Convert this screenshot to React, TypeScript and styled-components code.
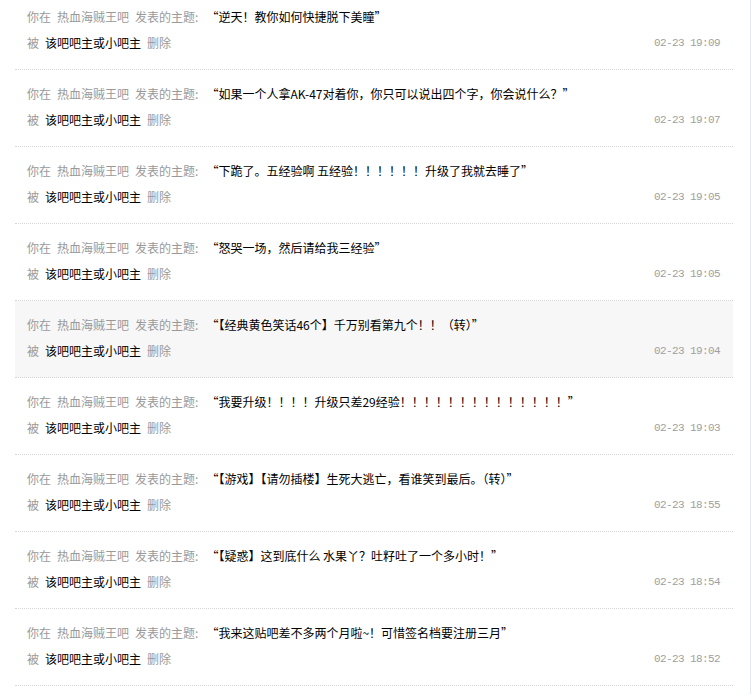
import React from "react";
import styled, { createGlobalStyle } from "styled-components";

interface Post {
  title: string;
  time: string;
}

const posts: Post[] = [
  { title: "“逆天！教你如何快捷脱下美瞳”", time: "02-23 19:09" },
  { title: "“如果一个人拿AK-47对着你，你只可以说出四个字，你会说什么？”", time: "02-23 19:07" },
  { title: "“下跪了。五经验啊 五经验！！！！！！升级了我就去睡了”", time: "02-23 19:05" },
  { title: "“怒哭一场，然后请给我三经验”", time: "02-23 19:05" },
  { title: "“【经典黄色笑话46个】千万别看第九个！！（转）”", time: "02-23 19:04" },
  { title: "“我要升级！！！！升级只差29经验！！！！！！！！！！！！！！”", time: "02-23 19:03" },
  { title: "“【游戏】【请勿插楼】生死大逃亡，看谁笑到最后。（转）”", time: "02-23 18:55" },
  { title: "“【疑惑】这到底什么 水果丫？吐籽吐了一个多小时！”", time: "02-23 18:54" },
  { title: "“我来这贴吧差不多两个月啦~！可惜签名档要注册三月”", time: "02-23 18:52" },
];

const GlobalStyle = createGlobalStyle`
  body {
    margin: 0;
    background: #fff;
    font-family: "Noto Sans CJK SC", "DejaVu Sans", sans-serif;
    font-size: 12px;
  }
`;

const Page = styled.div`
  width: 750px;
  height: 694px;
  overflow: hidden;
  border-right: 1px solid #e2e9f6;
`;

const List = styled.ul`
  list-style: none;
  margin: 0;
  padding: 0 0 0 15px;
  width: 718px;
`;

const Item = styled.li<{ $active?: boolean }>`
  display: flex;
  flex-direction: column;
  gap: 12px;
  padding: 17px 13px 19px 12px;
  border-bottom: 1px dotted #d6d6d6;
  background: ${(p) => (p.$active ? "#f7f7f7" : "transparent")};

  &:first-child {
    padding-top: 10px;
  }
`;

const Line = styled.div`
  display: flex;
  align-items: center;
  height: 14px;
  line-height: 14px;
  white-space: nowrap;
`;

const Muted = styled.span`
  color: #999;
  margin-right: 6px;
`;

const Strong = styled.span`
  color: #000;
  margin-right: 6px;
`;

const Title = styled.a`
  color: #000;
  text-decoration: none;
  margin-left: 2px;
`;

const Time = styled.span`
  margin-left: auto;
  color: #a0a0a0;
  font-family: "Liberation Mono", "DejaVu Sans Mono", monospace;
  font-size: 11px;
  letter-spacing: -0.6px;
`;

export default function App() {
  return (
    <Page>
      <GlobalStyle />
      <List>
        {posts.map((post, i) => (
          <Item key={i} $active={i === 4}>
            <Line>
              <Muted>你在</Muted>
              <Muted>热血海贼王吧</Muted>
              <Muted>发表的主题:</Muted>
              <Title href="#">{post.title}</Title>
            </Line>
            <Line>
              <Muted>被</Muted>
              <Strong>该吧吧主或小吧主</Strong>
              <Muted>删除</Muted>
              <Time>{post.time}</Time>
            </Line>
          </Item>
        ))}
      </List>
    </Page>
  );
}
